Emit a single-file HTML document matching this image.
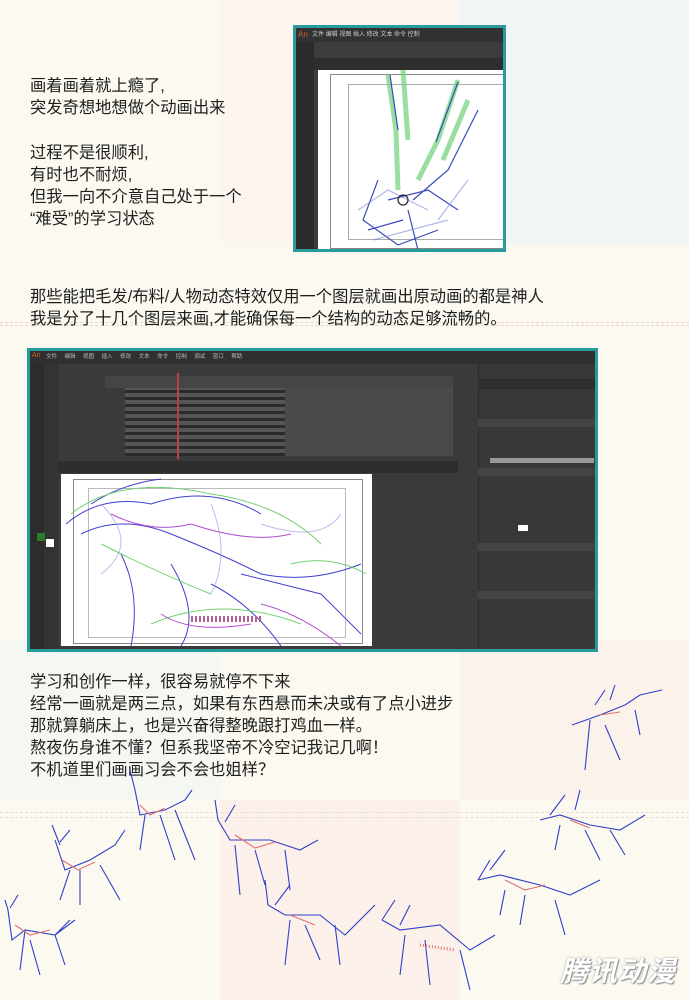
<!DOCTYPE html>
<html><head><meta charset="utf-8"><style>
*{margin:0;padding:0;box-sizing:border-box}
body{width:689px;height:1000px;overflow:hidden;position:relative;background:#fbf9f0;font-family:"Liberation Sans","Noto Sans CJK SC",sans-serif;color:#222}
.blk{position:absolute}
.t{position:absolute;left:30px;font-size:16.3px;line-height:22px;color:#1e1e1e;white-space:nowrap}
.shot{position:absolute;border:3px solid #2a9a9a;background:#3c3c3c;overflow:hidden}
.wm{position:absolute;left:560px;top:950px;font-size:28px;font-weight:bold;font-style:italic;color:#fff;text-shadow:0 0 2px #999,1px 1px 1px #888;letter-spacing:1px}
</style></head><body>
<div class="blk" style="left:460px;top:0;width:229px;height:245px;background:#f1f5f3"></div>
<div class="blk" style="left:220px;top:0;width:240px;height:245px;background:#fcf5f0"></div>
<div class="blk" style="left:220px;top:800px;width:240px;height:200px;background:#fcf0ea"></div>
<div class="blk" style="left:460px;top:640px;width:229px;height:160px;background:#fcf2ec"></div>
<div class="blk" style="left:0;top:640px;width:220px;height:160px;background:#f5f7f2"></div>
<div class="blk" style="left:0;top:322px;width:689px;height:4px;border-top:1px dashed #ecd4cc;border-bottom:1px dashed #ecd4cc"></div>
<div class="blk" style="left:0;top:812px;width:689px;height:6px;border-top:1px dashed #e6ddd6;border-bottom:1px dashed #e6ddd6"></div>

<div class="t" style="top:75px">画着画着就上瘾了,<br>突发奇想地想做个动画出来</div>
<div class="t" style="top:142px">过程不是很顺利,<br>有时也不耐烦,<br>但我一向不介意自己处于一个<br>“难受”的学习状态</div>
<div class="t" style="top:286px">那些能把毛发/布料/人物动态特效仅用一个图层就画出原动画的都是神人<br>我是分了十几个图层来画,才能确保每一个结构的动态足够流畅的。</div>
<div class="t" style="top:671px">学习和创作一样，很容易就停不下来<br>经常一画就是两三点，如果有东西悬而未决或有了点小进步<br>那就算躺床上，也是兴奋得整晚跟打鸡血一样。<br>熬夜伤身谁不懂？但系我坚帝不冷空记我记几啊！<br>不机道里们画画习会不会也姐样？</div>

<div class="shot" style="left:293px;top:25px;width:213px;height:227px">
 <div style="position:absolute;left:0;top:0;width:210px;height:14px;background:#323232;color:#ccc;font-size:6px;line-height:14px;padding-left:16px">文件 编辑 视图 插入 修改 文本 命令 控制</div>
 <div style="position:absolute;left:2px;top:2px;color:#d0602a;font-size:8px">An</div>
 <div style="position:absolute;left:18px;top:30px;width:192px;height:12px;background:#2e2e2e"></div>
 <div style="position:absolute;left:0;top:14px;width:18px;height:213px;background:#2b2b2b"></div>
 <div style="position:absolute;left:22px;top:42px;width:190px;height:185px;background:#fff">
  <div style="position:absolute;left:12px;top:4px;width:180px;height:175px;border:1px solid #888"></div>
  <div style="position:absolute;left:30px;top:14px;width:160px;height:156px;border:1px solid #aaa"></div>
  <svg width="190" height="185" style="position:absolute;left:0;top:0" fill="none" stroke-width="1.2">
   <path d="M70 5 L78 60 L80 120 M85 0 L90 70 M140 10 L120 70 L100 110 M150 30 L125 90" stroke="#6fd07a" stroke-width="5" opacity=".7"/>
   <path d="M72 5 L80 60 M140 12 L118 72 M160 40 L130 100 L95 130 M60 110 L45 150 L80 175 L120 160 M70 130 L110 120 L140 140 M90 140 L100 180 M50 160 L85 150" stroke="#3a4ab8"/>
   <path d="M40 140 L70 120 L110 140 M55 170 L130 150 M120 150 L150 110" stroke="#7b8bd8" opacity=".6"/>
   <circle cx="85" cy="130" r="5" stroke="#223"/>
  </svg>
 </div>
</div>

<div class="shot" style="left:27px;top:348px;width:571px;height:304px;background:#3a3a3a">
 <div style="position:absolute;left:0;top:0;width:568px;height:13px;background:#303030;color:#bbb;font-size:5.5px;line-height:13px;padding-left:16px;word-spacing:6px">文件 编辑 视图 插入 修改 文本 命令 控制 调试 窗口 帮助</div>
 <div style="position:absolute;left:2px;top:1px;color:#d0602a;font-size:7px">An</div>
 <div style="position:absolute;left:0;top:13px;width:14px;height:290px;background:#2c2c2c"></div>
 <div style="position:absolute;left:14px;top:13px;width:14px;height:290px;background:#333"></div>
 <div style="position:absolute;left:75px;top:25px;width:348px;height:12px;background:#454545"></div>
 <div style="position:absolute;left:95px;top:37px;width:160px;height:68px;background:repeating-linear-gradient(0deg,#2a2a2a 0 3px,#555 3px 7px)"></div>
 <div style="position:absolute;left:255px;top:37px;width:168px;height:68px;background:#4a4a4a"></div>
 <div style="position:absolute;left:147px;top:22px;width:2px;height:86px;background:#c04040"></div>
 <div style="position:absolute;left:28px;top:110px;width:400px;height:12px;background:#2e2e2e"></div>
 <div style="position:absolute;left:31px;top:123px;width:311px;height:172px;background:#fff;overflow:hidden">
  <div style="position:absolute;left:12px;top:5px;width:290px;height:165px;border:1px solid #888"></div>
  <div style="position:absolute;left:27px;top:14px;width:258px;height:150px;border:1px solid #bbb"></div>
  <svg width="311" height="172" style="position:absolute;left:0;top:0" fill="none" stroke-width="1">
   <path d="M5 50 Q40 20 90 30 Q150 10 200 40 M20 60 Q60 40 110 60 Q160 80 200 100 Q250 110 300 90 M60 80 Q80 120 70 172 M110 90 Q140 140 120 172 M150 110 Q190 130 220 172 M180 100 L260 120 L300 160 M30 30 Q60 10 100 5" stroke="#4040d0"/>
   <path d="M10 40 Q60 0 150 20 Q220 30 260 70 M40 70 Q100 100 150 120 M230 90 Q270 80 305 100 M90 150 Q160 120 240 150" stroke="#70d070"/>
   <path d="M50 40 Q90 60 130 50 Q190 70 230 60 M100 140 Q130 160 190 150 M200 130 Q240 140 280 172" stroke="#b050d0"/>
   <path d="M40 30 Q80 70 40 100 M150 30 Q170 80 150 120 M200 50 Q260 70 280 40" stroke="#9090e0" opacity=".6"/>
   <path d="M130 145 L200 145" stroke="#b06090" stroke-width="6" stroke-dasharray="2 2"/>
  </svg>
 </div>
 <div style="position:absolute;left:448px;top:13px;width:120px;height:290px;background:#383838;border-left:1px solid #2a2a2a"></div>
 <div style="position:absolute;left:448px;top:28px;width:120px;height:10px;background:#2e2e2e"></div>
 <div style="position:absolute;left:448px;top:68px;width:120px;height:8px;background:#444"></div>
 <div style="position:absolute;left:460px;top:107px;width:104px;height:5px;background:#999"></div>
 <div style="position:absolute;left:448px;top:117px;width:120px;height:8px;background:#444"></div>
 <div style="position:absolute;left:448px;top:192px;width:120px;height:8px;background:#444"></div>
 <div style="position:absolute;left:448px;top:240px;width:120px;height:8px;background:#444"></div>
 <div style="position:absolute;left:488px;top:174px;width:10px;height:6px;background:#fff"></div>
 <div style="position:absolute;left:7px;top:182px;width:8px;height:8px;background:#2a7a2a"></div>
 <div style="position:absolute;left:16px;top:188px;width:8px;height:8px;background:#fff"></div>
</div>

<svg width="689" height="1000" style="position:absolute;left:0;top:0" fill="none" stroke="#3040c8" stroke-width="1.1">
 <path d="M8 910 L12 940 L25 930 L55 935 L70 920 M25 930 L20 970 M30 940 L40 975 M55 935 L65 965 M55 935 L75 920 M8 910 L5 900 M10 908 L18 895" /><path d="M15 925 L30 935 L50 930" stroke="#e07070"/>
 <path d="M55 840 L65 870 L90 860 L115 845 L125 830 M70 870 L60 900 M80 870 L80 905 M100 865 L120 900 M60 845 L52 825 M60 842 L70 830" />
 <path d="M62 860 L78 870 L95 862" stroke="#e07070"/>
 <path d="M135 790 L140 815 L165 810 L185 800 L192 790 M145 815 L140 850 M160 815 L175 860 M175 810 L195 860 M135 790 L130 770" />
 <path d="M140 805 L150 815 L165 808" stroke="#e07070"/>
 <path d="M218 820 L230 840 L270 840 L300 850 L318 840 M235 845 L240 895 M255 850 L265 885 M285 850 L290 890 M218 820 L215 800 M225 822 L235 805" />
 <path d="M235 835 L255 848 L275 842" stroke="#e07070"/>
 <path d="M268 905 L285 915 L320 915 L345 935 L375 905 M290 920 L285 965 M305 925 L320 960 M335 925 L340 965 M268 905 L265 880 M275 905 L290 885" />
 <path d="M290 915 L315 925" stroke="#e07070"/>
 <path d="M382 920 L400 930 L440 925 L470 950 L495 935 M405 935 L400 975 M425 940 L430 985 M460 950 L470 990 M382 920 L395 900 M400 925 L410 905" />
 <path d="M420 945 L455 950" stroke="#e07070" stroke-width="3" stroke-dasharray="1 2"/>
 <path d="M478 880 L500 875 L540 885 L570 895 L600 880 M505 890 L500 915 M525 895 L520 925 M555 900 L565 935 M478 880 L490 860 M490 870 L505 850" />
 <path d="M505 880 L525 890 L545 885" stroke="#e07070"/>
 <path d="M540 820 L560 815 L590 825 L620 830 L645 815 M560 825 L555 850 M585 830 L600 860 M610 830 L625 855 M550 815 L565 795 M575 810 L580 790" />
 <path d="M570 820 L590 828" stroke="#e07070"/>
 <path d="M572 725 L600 715 L625 705 L640 695 L662 690 M590 720 L585 770 M605 725 L620 760 M635 710 L640 735 M595 705 L605 690 M610 700 L615 685" />
 <path d="M600 715 L620 712" stroke="#e07070"/>
</svg>
<div class="wm">腾讯动漫</div>
</body></html>
